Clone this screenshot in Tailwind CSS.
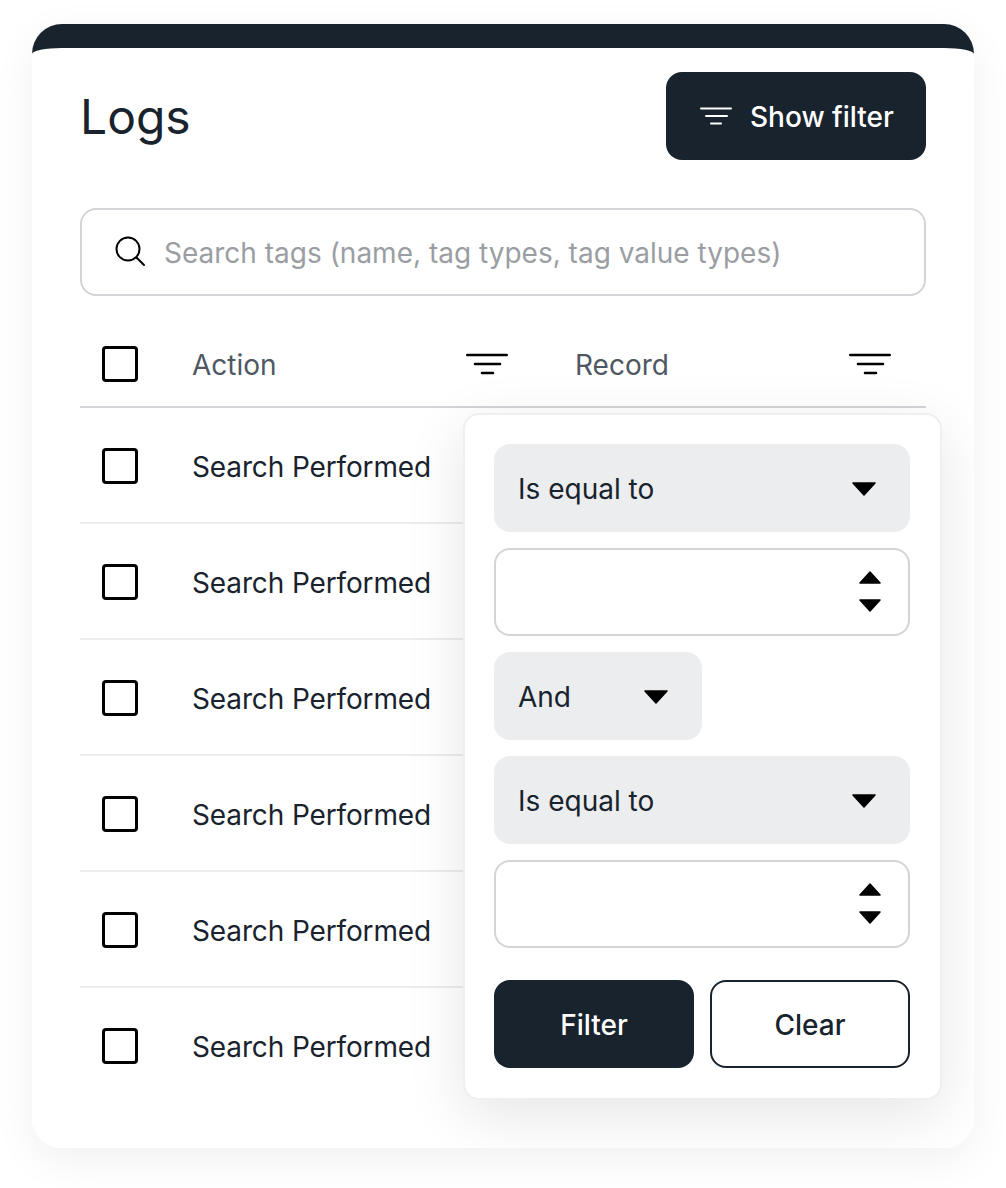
<!DOCTYPE html>
<html lang="en">
<head>
  <meta charset="UTF-8" />
  <title>Logs</title>
  <meta name="viewport" content="width=device-width, initial-scale=1.0" />
  <script src="https://cdn.jsdelivr.net/npm/@tailwindcss/browser@4"></script>
</head>
<body class="bg-white font-['Inter',sans-serif] text-[#19232d]">
  <div class="pt-6 px-8 h-[1188px] w-[1006px]">

    <!-- Card -->
    <div class="relative h-[1124px] w-[942px] rounded-[30px] shadow-[0_12px_44px_rgba(0,0,0,0.06)]">
      <div class="relative overflow-hidden h-full bg-white rounded-[30px] border-t-[24px] border-[#19232d] px-12 pt-6">

      <!-- Header -->
      <div class="flex justify-between items-center h-[88px]">
        <h1 class="text-[48px] leading-none font-normal mt-[2px]">Logs</h1>
        <button class="flex items-center gap-[18px] h-[88px] w-[260px] pl-[34px] rounded-2xl bg-[#19232d] text-white text-[28px] font-medium">
          <svg width="32" height="18" viewBox="0 0 32 18" fill="none" stroke="white" stroke-width="2" stroke-linecap="round">
            <path d="M1 1.5H31M6 9H27M11 16.5H21" />
          </svg>
          <span class="mt-[2px]">Show filter</span>
        </button>
      </div>

      <!-- Search -->
      <div class="mt-12 flex items-center h-[88px] rounded-2xl border-2 border-[#d2d4d7] pl-[33px] gap-[17px]">
        <svg width="32" height="32" viewBox="0 0 32 32" fill="none" stroke="black" stroke-width="2" stroke-linecap="round">
          <circle cx="13" cy="13" r="11.5" />
          <path d="M21.5 21.5L29 29" />
        </svg>
        <input class="flex-1 text-[28px] mt-[2px] outline-none placeholder:text-[#9a9ea3]" placeholder="Search tags (name, tag types, tag value types)" />
      </div>

      <!-- Table -->
      <div class="mt-6">
        <div class="flex items-center h-[88px] pt-[2px] pl-[22px] pr-[35px] border-b-2 border-[#d2d4d7] text-[#4f5862] text-[28px]">
          <div class="w-9 h-9 mr-[54px] border-[3px] border-black rounded-[4px]"></div>
          <div class="flex-1 grid grid-cols-2 gap-[67px]">
            <div class="flex items-center justify-between">
              <span class="mt-[2px]">Action</span>
              <svg width="42" height="22" viewBox="0 0 42 22" fill="none" stroke="black" stroke-width="2.6" stroke-linecap="round">
                <path d="M1.3 2H40.7M9 11H34M16 20H27" />
              </svg>
            </div>
            <div class="flex items-center justify-between">
              <span class="mt-[2px]">Record</span>
              <svg width="42" height="22" viewBox="0 0 42 22" fill="none" stroke="black" stroke-width="2.6" stroke-linecap="round">
                <path d="M1.3 2H40.7M9 11H34M16 20H27" />
              </svg>
            </div>
          </div>
        </div>

        <div class="flex items-center h-[116px] pt-[2px] pl-[22px] border-b-2 border-[#ebedee] text-[28px]">
          <div class="w-9 h-9 mr-[54px] border-[3px] border-black rounded-[4px]"></div>
          <span class="mt-[2px] tracking-[-0.13px]">Search Performed</span>
        </div>
        <div class="flex items-center h-[116px] pt-[2px] pl-[22px] border-b-2 border-[#ebedee] text-[28px]">
          <div class="w-9 h-9 mr-[54px] border-[3px] border-black rounded-[4px]"></div>
          <span class="mt-[2px] tracking-[-0.13px]">Search Performed</span>
        </div>
        <div class="flex items-center h-[116px] pt-[2px] pl-[22px] border-b-2 border-[#ebedee] text-[28px]">
          <div class="w-9 h-9 mr-[54px] border-[3px] border-black rounded-[4px]"></div>
          <span class="mt-[2px] tracking-[-0.13px]">Search Performed</span>
        </div>
        <div class="flex items-center h-[116px] pt-[2px] pl-[22px] border-b-2 border-[#ebedee] text-[28px]">
          <div class="w-9 h-9 mr-[54px] border-[3px] border-black rounded-[4px]"></div>
          <span class="mt-[2px] tracking-[-0.13px]">Search Performed</span>
        </div>
        <div class="flex items-center h-[116px] pt-[2px] pl-[22px] border-b-2 border-[#ebedee] text-[28px]">
          <div class="w-9 h-9 mr-[54px] border-[3px] border-black rounded-[4px]"></div>
          <span class="mt-[2px] tracking-[-0.13px]">Search Performed</span>
        </div>
        <div class="flex items-center h-[114px] pt-[2px] pl-[22px] text-[28px]">
          <div class="w-9 h-9 mr-[54px] border-[3px] border-black rounded-[4px]"></div>
          <span class="mt-[2px] tracking-[-0.13px]">Search Performed</span>
        </div>
      </div>

      <!-- Filter popover -->
      <div class="absolute left-[431px] top-[365px] w-[479px] h-[687px] flex flex-col gap-4 bg-white border-2 border-[#efefef] rounded-2xl pl-[29px] pr-[30px] pt-[29px] text-[28px] shadow-[0_16px_60px_rgba(0,0,0,0.1)]">
        <div class="flex items-center justify-between h-[88px] pl-6 pr-[33px] rounded-2xl bg-[#ebedee]">
          <span class="mt-[2px]">Is equal to</span>
          <svg class="mt-[2px]" width="26" height="14" viewBox="0 0 26 14"><path d="M2 1H24L13 13Z" fill="black" stroke="black" stroke-width="1.5" stroke-linejoin="round" /></svg>
        </div>
        <div class="flex items-center justify-end h-[88px] pr-[26px] rounded-2xl border-2 border-[#d2d4d7]">
          <div class="flex flex-col gap-[15px] -mt-[1px]">
            <svg width="24" height="13" viewBox="0 0 24 13"><path d="M12 1L22 12H2Z" fill="black" stroke="black" stroke-width="1.5" stroke-linejoin="round" /></svg>
            <svg width="24" height="13" viewBox="0 0 24 13"><path d="M2 1H22L12 12Z" fill="black" stroke="black" stroke-width="1.5" stroke-linejoin="round" /></svg>
          </div>
        </div>
        <div class="flex items-center justify-between h-[88px] w-[208px] pl-6 pr-[33px] rounded-2xl bg-[#ebedee]">
          <span class="mt-[2px]">And</span>
          <svg class="mt-[2px]" width="26" height="14" viewBox="0 0 26 14"><path d="M2 1H24L13 13Z" fill="black" stroke="black" stroke-width="1.5" stroke-linejoin="round" /></svg>
        </div>
        <div class="flex items-center justify-between h-[88px] pl-6 pr-[33px] rounded-2xl bg-[#ebedee]">
          <span class="mt-[2px]">Is equal to</span>
          <svg class="mt-[2px]" width="26" height="14" viewBox="0 0 26 14"><path d="M2 1H24L13 13Z" fill="black" stroke="black" stroke-width="1.5" stroke-linejoin="round" /></svg>
        </div>
        <div class="flex items-center justify-end h-[88px] pr-[26px] rounded-2xl border-2 border-[#d2d4d7]">
          <div class="flex flex-col gap-[15px] -mt-[1px]">
            <svg width="24" height="13" viewBox="0 0 24 13"><path d="M12 1L22 12H2Z" fill="black" stroke="black" stroke-width="1.5" stroke-linejoin="round" /></svg>
            <svg width="24" height="13" viewBox="0 0 24 13"><path d="M2 1H22L12 12Z" fill="black" stroke="black" stroke-width="1.5" stroke-linejoin="round" /></svg>
          </div>
        </div>
        <div class="grid grid-cols-2 gap-4 mt-4 font-medium">
          <button class="h-[88px] pt-[2px] rounded-2xl bg-[#19232d] text-white">Filter</button>
          <button class="h-[88px] pt-[2px] rounded-2xl border-2 border-[#19232d]">Clear</button>
        </div>
      </div>
      </div>
    </div>
  </div>
</body>
</html>
